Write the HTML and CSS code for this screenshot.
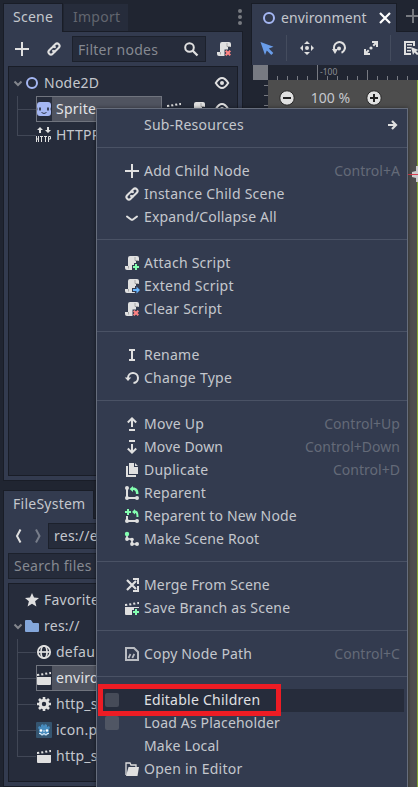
FILE: index.html
```html
<!DOCTYPE html>
<html lang="en">
<head>
<meta charset="utf-8">
<title>Scene editor</title>
<link rel="stylesheet" href="styles.css">
</head>
<body>
<svg class="defs" width="0" height="0" aria-hidden="true">
  <symbol id="add" viewBox="0 0 16 16"><path d="M7 1v6H1v2h6v6h2V9h6V7H9V1z"/></symbol>
  <symbol id="link" viewBox="0 0 16 16"><g fill="none" stroke="currentColor" stroke-width="2" stroke-linecap="round"><path d="M7 5.500l2.300-2.300a2.400 2.400 0 0 1 3.500 3.500L10 9.500a2.400 2.400 0 0 1-3 .4"/><path d="M9 10.500l-2.300 2.300a2.400 2.400 0 0 1-3.500-3.500L6 6.500a2.400 2.400 0 0 1 3-.4"/></g></symbol>
  <symbol id="search" viewBox="0 0 16 16"><circle cx="6.500" cy="6.500" r="4.300" fill="none" stroke="currentColor" stroke-width="2"/><path d="M9.500 9.500l5 5" stroke="currentColor" stroke-width="2.300"/></symbol>
  <symbol id="scroll" viewBox="0 0 16 16"><path d="M6 1a2 2 0 0 0-2 2v8H1v2a2 2 0 0 0 2 2h7a2 2 0 0 0 2-2V6h3V3a2 2 0 0 0-2-2z"/><path d="M11 2v3.500h3.500M4.500 11v2.500" fill="none" stroke="#000" stroke-opacity=".25"/></symbol>
  <symbol id="script-add" viewBox="0 0 16 16"><use href="#scroll"/><path d="M10 8h6v8H8v-6h2z" fill="#333b4f"/><path d="M11 9h2v2h2v2h-2v2h-2v-2H9v-2h2z" fill="#84ffb1"/></symbol>
  <symbol id="script-extend" viewBox="0 0 16 16"><use href="#scroll"/><path d="M8 10h3V8h5v8h-5v-2H8z" fill="#333b4f"/><path d="M12.500 8.500L16 12l-3.500 3.500V13H9v-2h3.500z" fill="#68b6ff"/></symbol>
  <symbol id="script-clear" viewBox="0 0 16 16"><use href="#scroll"/><path d="M8.500 8.500H16V16H8.500z" fill="#333b4f"/><path d="M9.700 9.700l4.600 4.600m0-4.600l-4.600 4.600" stroke="#ff8484" stroke-width="2"/></symbol>
  <symbol id="down" viewBox="0 0 16 16"><path d="M3 7.500l4 3q1 .7 2 0l4-3" fill="none" stroke="currentColor" stroke-width="2" stroke-linecap="round"/></symbol>
  <symbol id="rename" viewBox="0 0 16 16"><path d="M5 2h6v2H9v8h2v2H5v-2h2V4H5z"/></symbol>
  <symbol id="reload" viewBox="0 0 16 16"><path d="M4 9a5 5 0 1 1 5.500 5" transform="translate(0 -1)" fill="none" stroke="currentColor" stroke-width="2"/><path d="M.8 7.500h6.400L4 11z"/></symbol>
  <symbol id="moveup" viewBox="0 0 16 16"><path d="M8 11V3M3.800 6.500L8 2.300l4.200 4.200" fill="none" stroke="currentColor" stroke-width="2"/><path d="M5 13h6v2H5z"/></symbol>
  <symbol id="movedown" viewBox="0 0 16 16"><path d="M8 5v8M3.800 9.500L8 13.700l4.200-4.200" fill="none" stroke="currentColor" stroke-width="2"/><path d="M5 1h6v2H5z"/></symbol>
  <symbol id="duplicate" viewBox="0 0 16 16"><path d="M5 1h5v4h4v7H5zM11 1l3 3h-3zM2 4h2v9h8v2H2z"/></symbol>
  <symbol id="reparent" viewBox="0 0 16 16"><path d="M3 3v10h10" fill="none" stroke="currentColor" stroke-width="2"/><circle cx="3" cy="3" r="2"/><circle cx="3" cy="13" r="2"/><circle cx="13" cy="13" r="2"/><path d="M9 1v1.500c4 0 5.500 2.500 5.500 6.500h-2.500c0-2.700-1-4-3-4v2L5.500 4z" fill="#84ffb1"/></symbol>
  <symbol id="reparent-new" viewBox="0 0 16 16"><path d="M3 8v5h10" fill="none" stroke="currentColor" stroke-width="2"/><circle cx="3" cy="13" r="2"/><circle cx="13" cy="13" r="2"/><path d="M3 1h2v2h2v2H5v2H3V5H1V3h2zM11 1v1.500c2.500 0 3.500 2 3.500 6.500h-2c0-3-.2-4-1.500-4v1.500L8 4z" fill="#84ffb1"/></symbol>
  <symbol id="root" viewBox="0 0 16 16"><path d="M3 3v5h5v5h5" fill="none" stroke="currentColor" stroke-width="1.700"/><circle cx="3" cy="8" r="1.900"/><circle cx="8" cy="8.500" r="1.800"/><circle cx="8" cy="13" r="1.900"/><circle cx="13" cy="13" r="2"/><circle cx="3" cy="3" r="2.200" fill="#84ffb1"/></symbol>
  <symbol id="merge" viewBox="0 0 16 16"><path d="M3 3l9 9M3 13l9-9" fill="none" stroke="currentColor" stroke-width="2.200"/><path d="M9 1h6v6h-2V3H9zM9 15h6V9h-2v4H9z"/></symbol>
  <symbol id="clap" viewBox="0 0 16 16"><path d="M1 7h14v7a1 1 0 0 1-1 1H2a1 1 0 0 1-1-1zM1 4l2-.3.5 2-2.500.3zM5 3.500l2-.3.500 2-2 .3zM9 2.800l2-.3.500 2-2 .3zM13 2.300l2-.3v2l-1.500.3z"/></symbol>
  <symbol id="clap-add" viewBox="0 0 16 16"><use href="#clap"/><path d="M10 8h6v8H8v-6h2z" fill="#333b4f"/><path d="M11 9h2v2h2v2h-2v2h-2v-2H9v-2h2z" fill="#84ffb1"/></symbol>
  <symbol id="nodepath" viewBox="0 0 16 16"><path d="M2 2h8l4 4v8H2z" fill="none" stroke="currentColor" stroke-width="2"/><path d="M4.500 12l2-4m1.800 4l2-4" stroke="currentColor" stroke-width="1.700"/></symbol>
  <symbol id="open" viewBox="0 0 16 16"><path d="M2 14V2h4l1 2h5v2" fill="none" stroke="currentColor" stroke-width="1.300"/><path d="M4.500 6H15l-1.500 9H2z"/></symbol>
  <symbol id="arrow" viewBox="0 0 16 16"><path d="M4 8h8M8 4l4 4-4 4" fill="none" stroke="currentColor" stroke-width="2.200"/></symbol>
  <symbol id="ring" viewBox="0 0 16 16"><circle cx="8" cy="8" r="5" fill="none" stroke="#a5b7f3" stroke-width="2"/></symbol>
  <symbol id="eye" viewBox="0 0 16 16"><path d="M1.800 8q6.200-10 12.400 0q-6.200 10-12.400 0z" fill="none" stroke="currentColor" stroke-width="2"/><circle cx="8" cy="8" r="2"/></symbol>
  <symbol id="sprite" viewBox="0 0 16 16"><path d="M4 1h8a3 3 0 0 1 3 3v2l-.5 2 .5 2v2a3 3 0 0 1-3 3H4a3 3 0 0 1-3-3v-2l.5-2L1 6V4a3 3 0 0 1 3-3z" fill="#a5b7f3"/><path d="M4 6.500v3M12 6.500v3" stroke="#30384c" stroke-width="1.800"/><path d="M5.500 11.500q2.500 2 5 0" fill="none" stroke="#30384c"/></symbol>
  <symbol id="http" viewBox="0 0 16 16"><path d="M4 0l3 3H5v3H3V3H1zM11 0h2v3h2l-3 3-3-3h2z"/><path d="M.5 9v6M2.500 9v6M.5 12h2M4 9.500h3M5.500 9v6M8 9.500h3M9.500 9v6M12.500 15V9.500h2V12h-2" fill="none" stroke="currentColor"/></symbol>
  <symbol id="chev" viewBox="0 0 12 12"><path d="M2.500 4.500L6 8l3.500-3.500" fill="none" stroke="#83868d" stroke-width="2"/></symbol>
  <symbol id="back" viewBox="0 0 8 16"><path d="M6.500 1.500L3 8l3.500 6.500" fill="none" stroke="currentColor" stroke-width="2"/></symbol>
  <symbol id="fwd" viewBox="0 0 8 16"><path d="M2 1.500L5.500 8 2 14.500" fill="none" stroke="currentColor" stroke-width="2"/></symbol>
  <symbol id="star" viewBox="0 0 16 16"><path d="M8 1l2 4.600 5 .4-3.900 3.300 1.300 5.200L8 11.700l-4.400 2.800 1.300-5.200L1 6l5-.4z"/></symbol>
  <symbol id="folder" viewBox="0 0 16 16"><path d="M2 2h5l2 3h5a1 1 0 0 1 1 1v7a1 1 0 0 1-1 1H2a1 1 0 0 1-1-1V3a1 1 0 0 1 1-1z" fill="#84a7db"/></symbol>
  <symbol id="globe" viewBox="0 0 16 16"><g fill="none" stroke="currentColor" stroke-width="1.700"><circle cx="8" cy="8" r="6.200"/><ellipse cx="8" cy="8" rx="3" ry="6.200"/><path d="M2 8h12"/></g></symbol>
  <symbol id="gear" viewBox="0 0 16 16"><circle cx="8" cy="8" r="3.700" fill="none" stroke="currentColor" stroke-width="3"/><g stroke="currentColor" stroke-width="2.600"><path d="M8 1v3M8 12v3M1 8h3M12 8h3M3 3l2 2M11 11l2 2M13 3l-2 2M5 11l-2 2"/></g></symbol>
  <symbol id="robot" viewBox="0 0 16 16"><rect width="16" height="16" rx="1" fill="#355570"/><path d="M2 6l1-2 2 1V3l2-1 1 2 1-2 2 1v2l2-1 1 2-1 1v5q-5 3-10 0V7z" fill="#478cbf"/><circle cx="5" cy="8.500" r="1.300" fill="#fff"/><circle cx="11" cy="8.500" r="1.300" fill="#fff"/><path d="M3 11.500h2v1.300h2v-1h2v1h2v-1.300h2M8 8v2" stroke="#fff" stroke-width=".8" fill="none"/></symbol>
  <symbol id="cursor" viewBox="0 0 16 16"><path d="M1.500 2l13 4.700-4.700 1.800 4.500 4.500-2 2-4.500-4.500L6 15z"/></symbol>
  <symbol id="move" viewBox="0 0 16 16"><path d="M8 1l3 3H5zM8 15l3-3H5zM1 8l3-3v6zM15 8l-3-3v6z"/><circle cx="8" cy="8" r="2"/></symbol>
  <symbol id="rotate" viewBox="0 0 16 16"><path d="M3.500 10a5.500 5.500 0 1 1 7 2.700" fill="none" stroke="currentColor" stroke-width="2"/><path d="M1 9h6l-3 5z"/><circle cx="8" cy="8.500" r="2"/></symbol>
  <symbol id="scale" viewBox="0 0 16 16"><path d="M9 1h6v6h-2V4.500l-2 2L9.500 5l2-2H9zM1 9h2v2.500l2-2L6.500 11l-2 2H7v2H1z"/><circle cx="8" cy="8" r="1.600"/></symbol>
  <symbol id="listsel" viewBox="0 0 16 16"><path d="M1 1h11v5h-2V3H3v10h5v2H1z"/><path d="M4 4h5v1.500H4zM4 7h4v1.500H4zM4 10h4v1.500H4zM8 7l8 3-3 1 3 3-2 1-2.500-2.500L10 15z"/></symbol>
  <symbol id="close" viewBox="0 0 16 16"><path d="M3 3l10 10M13 3L3 13" stroke="currentColor" stroke-width="2.200"/></symbol>
  <symbol id="minus" viewBox="0 0 16 16"><circle cx="8" cy="8" r="7.200" stroke="#292929" stroke-width="1"/><path d="M4 7h8v2H4z" fill="#222"/></symbol>
  <symbol id="plus" viewBox="0 0 16 16"><circle cx="8" cy="8" r="7.200" stroke="#292929" stroke-width="1"/><path d="M4 7h3V4h2v3h3v2H9v3H7V9H4z" fill="#222"/></symbol>
</svg>

<div class="app">
  <div class="docks">
    <section class="dock scene">
      <div class="tabs">
        <div class="tab active">Scene</div>
        <div class="tab idle">Import</div>
        <div class="dots"><i></i><i></i><i></i></div>
      </div>
      <div class="panel">
        <div class="tools">
          <svg class="ic"><use href="#add"/></svg>
          <svg class="ic"><use href="#link"/></svg>
          <div class="field filter"><span>Filter nodes</span><svg class="ic"><use href="#search"/></svg></div>
          <svg class="ic"><use href="#script-clear"/></svg>
        </div>
        <div class="tree">
          <div class="node"><svg class="chev"><use href="#chev"/></svg><svg class="ic"><use href="#ring"/></svg><span>Node2D</span><svg class="ic end"><use href="#eye"/></svg></div>
          <div class="kids">
            <div class="node"><div class="cell sel short"><svg class="ic"><use href="#sprite"/></svg><span>Sprite</span></div><div class="buttons"><svg class="ic"><use href="#clap"/></svg><svg class="ic"><use href="#scroll"/></svg><svg class="ic"><use href="#eye"/></svg></div></div>
            <div class="node"><div class="cell"><svg class="ic"><use href="#http"/></svg><span>HTTPR</span></div></div>
          </div>
        </div>
      </div>
    </section>
    <section class="dock files">
      <div class="tabs"><div class="tab active">FileSystem</div></div>
      <div class="panel">
        <div class="nav"><svg class="nv"><use href="#back"/></svg><svg class="nv dim"><use href="#fwd"/></svg><div class="field path">res://e</div></div>
        <div class="field find">Search files</div>
        <div class="tree">
          <div class="node"><span class="chev"></span><svg class="ic"><use href="#star"/></svg><span>Favorite</span></div>
          <div class="node"><svg class="chev"><use href="#chev"/></svg><svg class="ic"><use href="#folder"/></svg><span>res://</span></div>
          <div class="kids">
            <div class="node"><div class="cell"><svg class="ic"><use href="#globe"/></svg><span>defau</span></div></div>
            <div class="node"><div class="cell sel"><svg class="ic"><use href="#clap"/></svg><span>enviro</span></div></div>
            <div class="node"><div class="cell"><svg class="ic"><use href="#gear"/></svg><span>http_s</span></div></div>
            <div class="node"><div class="cell"><svg class="ic"><use href="#robot"/></svg><span>icon.p</span></div></div>
            <div class="node"><div class="cell"><svg class="ic"><use href="#clap"/></svg><span>http_s</span></div></div>
          </div>
        </div>
      </div>
    </section>
  </div>

  <main class="editor">
    <div class="tabs">
      <div class="tab active scene-tab"><svg class="ic"><use href="#ring"/></svg><span>environment</span><svg class="ic"><use href="#close"/></svg></div>
      <svg class="ic newtab"><use href="#add"/></svg>
    </div>
    <div class="modes">
      <svg class="ic blue"><use href="#cursor"/></svg><i class="bar"></i>
      <svg class="ic"><use href="#move"/></svg><svg class="ic"><use href="#rotate"/></svg><svg class="ic"><use href="#scale"/></svg><i class="bar"></i>
      <svg class="ic"><use href="#listsel"/></svg>
    </div>
    <div class="view">
      <div class="corner"></div>
      <svg class="hruler" viewBox="0 0 150 15"><path d="M9.500 11v4m10-4v4m10-4v4m10-4v4M49.500 0v15m10-4v4m10-4v4m10-4v4m10-4v4m10-10v10m10-4v4m10-4v4m10-4v4m10-4v4" stroke="#777a82"/><text x="52" y="10">-100</text></svg>
      <svg class="vruler" viewBox="0 0 15 707"><path d="M11 5.500h4m-4 10h4m-4 10h4m-4 10h4" stroke="#777a82"/></svg>
      <div class="canvas">
        <div class="zoom"><svg class="ic"><use href="#minus"/></svg><span>100 %</span><svg class="ic"><use href="#plus"/></svg></div>
        <svg class="origin" viewBox="0 0 10 16"><path d="M8 0v5l-4 1v2H2v1h2v2l4 1v4h2V0z" fill="#ccc"/><path d="M0 8.500h10" stroke="#d83b4c"/></svg>
      </div>
    </div>
  </main>
</div>

<div class="menu">
  <div class="item"><span class="ic"></span><span>Sub-Resources</span><svg class="ic sub"><use href="#arrow"/></svg></div>
  <div class="sep"></div>
  <div class="item"><svg class="ic"><use href="#add"/></svg><span>Add Child Node</span><kbd>Control+A</kbd></div>
  <div class="item"><svg class="ic"><use href="#link"/></svg><span>Instance Child Scene</span></div>
  <div class="item"><svg class="ic"><use href="#down"/></svg><span class="tight">Expand/Collapse All</span></div>
  <div class="sep"></div>
  <div class="item"><svg class="ic"><use href="#script-add"/></svg><span>Attach Script</span></div>
  <div class="item"><svg class="ic"><use href="#script-extend"/></svg><span>Extend Script</span></div>
  <div class="item"><svg class="ic"><use href="#script-clear"/></svg><span>Clear Script</span></div>
  <div class="sep"></div>
  <div class="item"><svg class="ic"><use href="#rename"/></svg><span>Rename</span></div>
  <div class="item"><svg class="ic"><use href="#reload"/></svg><span>Change Type</span></div>
  <div class="sep"></div>
  <div class="item"><svg class="ic"><use href="#moveup"/></svg><span>Move Up</span><kbd>Control+Up</kbd></div>
  <div class="item"><svg class="ic"><use href="#movedown"/></svg><span class="tight">Move Down</span><kbd>Control+Down</kbd></div>
  <div class="item"><svg class="ic"><use href="#duplicate"/></svg><span>Duplicate</span><kbd>Control+D</kbd></div>
  <div class="item"><svg class="ic"><use href="#reparent"/></svg><span>Reparent</span></div>
  <div class="item"><svg class="ic"><use href="#reparent-new"/></svg><span class="tight">Reparent to New Node</span></div>
  <div class="item"><svg class="ic"><use href="#root"/></svg><span class="tight">Make Scene Root</span></div>
  <div class="sep"></div>
  <div class="item"><svg class="ic"><use href="#merge"/></svg><span class="tight">Merge From Scene</span></div>
  <div class="item"><svg class="ic"><use href="#clap-add"/></svg><span>Save Branch as Scene</span></div>
  <div class="sep"></div>
  <div class="item"><svg class="ic muted"><use href="#nodepath"/></svg><span class="tight">Copy Node Path</span><kbd>Control+C</kbd></div>
  <div class="sep"></div>
  <div class="item hover check"><i class="box"></i><span>Editable Children</span></div>
  <div class="item check"><i class="box"></i><span class="tight">Load As Placeholder</span></div>
  <div class="item"><span class="ic"></span><span class="tight">Make Local</span></div>
  <div class="item"><svg class="ic"><use href="#open"/></svg><span>Open in Editor</span></div>
</div>
<div class="marker"></div>
</body>
</html>
```
FILE: styles.css
```css
* { box-sizing: border-box; }
body {
  margin: 0;
  width: 418px;
  height: 787px;
  overflow: hidden;
  position: relative;
  background: #202531;
  color: #c4c7cd;
  font: 14px/20px "Noto Sans", sans-serif;
  letter-spacing: .25px;
  white-space: nowrap;
}
.defs { position: absolute; }
.ic { width: 16px; height: 16px; flex: none; color: #e0e0e0; fill: currentColor; display: block; }
.ic.muted { color: #b9bcc2; }
.app { display: flex; height: 787px; padding-left: 3px; gap: 8px; }
.docks { width: 240px; flex: none; display: flex; flex-direction: column; gap: 9px; padding-top: 3px; }
.dock { display: flex; flex-direction: column; }
.dock.scene { height: 478px; }
.dock.files { flex: 1; }
.tabs { display: flex; height: 28px; flex: none; position: relative; z-index: 1; }
.tab { border: 1px solid #191d27; border-bottom: 0; height: 28px; line-height: 26px; flex: none; }
.tab.active { background: #333b4f; height: 29px; padding: 0 9px; }
.tab.idle { background: #262c3b; color: #62666f; padding: 0 9px; border-color: #202531; }
.scene .tab.active { width: 60px; }
.scene .tab.idle { width: 66px; }
.files .tab.active { width: 91px; }
.dots { margin: 6px 1px 0 auto; display: grid; gap: 2px; align-content: start; }
.dots i { width: 4px; height: 4px; border-radius: 2px; background: #777a80; }
.panel { flex: 1; min-height: 0; background: #333b4f; border: 1px solid #191d27; padding: 4px; display: flex; flex-direction: column; }
.tools { display: flex; align-items: center; height: 26px; padding: 0 6px; gap: 16px; flex: none; }
.field { background: #262c3b; border: 1px solid #1c212c; color: #858991; height: 26px; line-height: 23px; padding: 0 5px; overflow: hidden; }
.filter { width: 134px; flex: none; display: flex; justify-content: space-between; align-items: center; margin: 0 -6px; padding-right: 6px; }
.tree { flex: 1; min-height: 0; margin-top: 4px; background: #262c3b; border: 1px solid #191d27; padding-top: 3px; overflow: hidden; }
.node { display: flex; align-items: center; height: 26px; }
.node > span:not(.chev) { margin-left: 4px; }
.chev { width: 12px; height: 12px; margin: 0 0 0 3px; flex: none; }
.end { margin-left: auto; margin-right: 7px; margin-top: -1px; }
.kids { margin-left: 8px; }
.kids .node { padding-left: 19px; background: linear-gradient(#414756, #414756) 0 13px / 19px 1px no-repeat, linear-gradient(#414756, #414756) 0 0 / 1px 26px no-repeat; }
.kids .node:last-child { background-size: 19px 1px, 1px 13px; }
.cell { display: flex; align-items: center; gap: 4px; height: 26px; flex: 1; overflow: hidden; border: 1px solid transparent; border-left-width: 0; }
.cell.sel { background: linear-gradient(90deg, #262c3b 15px, #505460 15px); border: 1px solid #70747e; color: #e3e4e7; }
.cell.sel .ic { margin-left: -1px; }
.cell.short { flex: none; width: 126px; }
.buttons { display: flex; gap: 8px; margin-left: 4px; }
.nav { display: flex; align-items: center; height: 26px; flex: none; }
.nv { width: 8px; height: 16px; margin: 0 6px; color: #e0e0e0; }
.dim { color: #777d8a; }
.path { flex: 1; color: #c4c7cd; }
.find { margin-top: 4px; flex: none; }

.editor { flex: 1; min-width: 0; overflow: hidden; padding-top: 3px; display: flex; flex-direction: column; }
.editor .tab.active { width: 146px; display: flex; align-items: center; gap: 4px; padding: 0 3px 0 9px; letter-spacing: .1px; }
.scene-tab .ic:last-child { margin-left: auto; color: #fff; }
.ic.newtab { color: #777a80; margin: 5px 0 0 8px; }
.modes { height: 34px; background: #333b4f; border: 1px solid #191d27; border-bottom: 0; border-right: 0; display: flex; align-items: center; gap: 16px; padding: 0 0 1px 7px; flex: none; }
.modes .blue { color: #699ce8; margin-right: -5px; }
.bar { width: 1px; height: 26px; background: #444c5e; flex: none; }
.bar + .ic { margin-left: -4px; }
.modes .ic + .bar:nth-last-child(2) { margin-left: -5px; }
.view { flex: 1; margin-left: 2px; display: grid; grid-template: 15px 1fr / 15px 1fr; }
.corner { background: #777a82; }
.hruler { width: 150px; height: 15px; }
.hruler text { font: 8.5px "Noto Sans", sans-serif; letter-spacing: 0; fill: #8b8e95; }
.vruler { width: 15px; height: 707px; }
.canvas { background: #4d4d4d; border-right: 1px solid #82a536; position: relative; }
.zoom { display: flex; align-items: center; height: 16px; margin: 10px 0 0 11px; letter-spacing: 0; }
.zoom span { width: 71px; text-align: center; }
.origin { position: absolute; right: -1px; top: 86px; width: 10px; height: 16px; }

.menu { position: absolute; left: 96px; top: 108px; width: 312px; height: 690px; background: #333b4f; border: 1px solid #666d7c; padding-top: 5px; box-shadow: 0 0 4px #0007; }
.item { height: 23px; padding: 0 7px 0 27px; display: flex; align-items: center; gap: 4px; }
.item > .ic { margin-top: -1px; }
.item > span { line-height: 22px; height: 23px; }
.item > span.ic { height: 16px; }
.item .tight { letter-spacing: .17px; }
.item kbd { margin-left: auto; font: inherit; letter-spacing: .03px; line-height: 22px; height: 23px; color: #646a78; }
.item .sub { margin-left: auto; margin-right: 0; }
.sep { height: 23px; padding-top: 10px; }
.sep::before { content: ""; display: block; height: 1px; background: #4a5265; }
.check { padding-left: 8px; gap: 25px; }
.box { width: 14px; height: 14px; border-radius: 2px; background: #505664; margin-top: -1px; }
.hover { background: #262c3b; color: #e0e1e4; margin: 0 3px 0 4px; padding-left: 4px; }
.hover .box { background: #464b58; }
.marker { position: absolute; left: 98px; top: 684px; width: 183px; height: 32px; border: 5px solid #ed1c24; }
```
